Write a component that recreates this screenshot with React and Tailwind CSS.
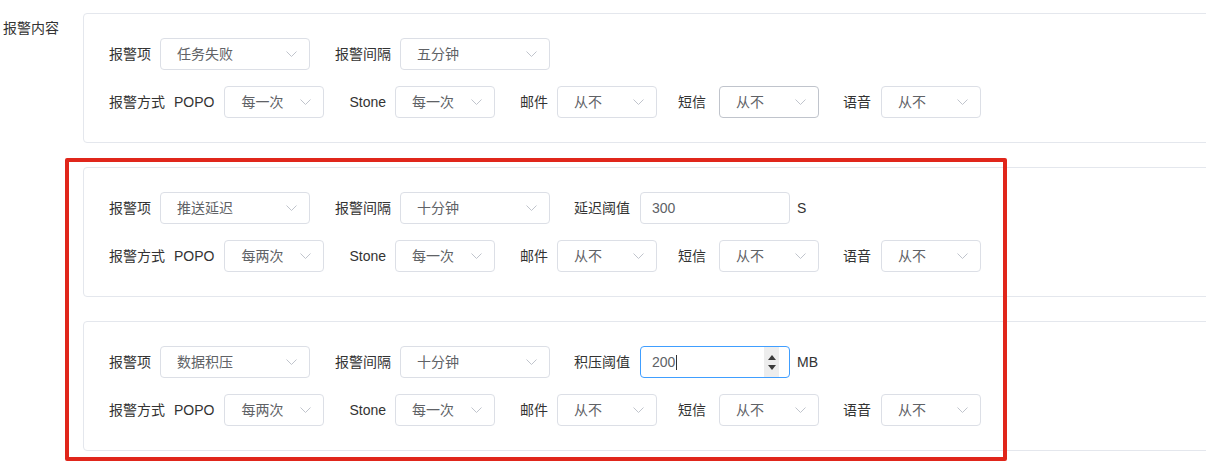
import React from 'react';

const Chevron = () => (
  <svg width="11" height="6" viewBox="0 0 11 6" className="shrink-0">
    <polyline points="0.5,0.5 5.5,5.5 10.5,0.5" fill="none" stroke="#c0c4cc" strokeWidth="1" />
  </svg>
);

const Select = ({ value, wide, hover }) => (
  <div
    className={`flex items-center justify-between h-[32px] pl-[16px] pr-[12px] rounded-[4px] border bg-white ${
      wide ? 'w-[150px]' : 'w-[100px]'
    } ${hover ? 'border-[#c0c4cc]' : 'border-[#dcdfe6]'}`}
  >
    <span className="text-[14px] text-[#606266]">{value}</span>
    <Chevron />
  </div>
);

const NumberInput = ({ value, focused }) => (
  <div
    className={`relative flex items-center w-[150px] h-[32px] pl-[11px] rounded-[4px] border bg-white ${
      focused ? 'border-[#409eff]' : 'border-[#dcdfe6]'
    }`}
  >
    <span className="text-[14px] text-[#606266]">{value}</span>
    {focused && (
      <>
        <span className="w-[1px] h-[15px] bg-[#303133] ml-[1px]" />
        <div className="absolute right-[10px] top-0 bottom-0 w-[15px] bg-[#ededed] flex flex-col items-center justify-center gap-[5px]">
          <svg width="8" height="5" viewBox="0 0 8 5">
            <polygon points="4,0 8,5 0,5" fill="#3a3a3a" />
          </svg>
          <svg width="8" height="5" viewBox="0 0 8 5">
            <polygon points="0,0 8,0 4,5" fill="#3a3a3a" />
          </svg>
        </div>
      </>
    )}
  </div>
);

const AlarmCard = ({ item, interval, popo, threshold, smsHover }) => (
  <div className="w-[1150px] shrink-0 h-[130px] border border-[#e4e7ed] rounded-[4px] bg-white pl-[25px] pt-[24px] flex flex-col gap-[16px] text-[14px] text-[#333]">
    <div className="flex items-center h-[32px]">
      <span className="mr-[9px]">报警项</span>
      <Select value={item} wide />
      <span className="ml-[25px] mr-[9px]">报警间隔</span>
      <Select value={interval} wide />
      {threshold && (
        <>
          <span className="ml-[24px] mr-[10px]">{threshold.label}</span>
          <NumberInput value={threshold.value} focused={threshold.focused} />
          <span className="ml-[7px]">{threshold.unit}</span>
        </>
      )}
    </div>
    <div className="flex items-center h-[32px]">
      <span className="mr-[9px]">报警方式</span>
      <span className="mr-[10px]">POPO</span>
      <Select value={popo} />
      <span className="ml-[25px] mr-[9px]">Stone</span>
      <Select value="每一次" />
      <span className="ml-[25px] mr-[9px]">邮件</span>
      <Select value="从不" />
      <span className="ml-[21px] mr-[13px]">短信</span>
      <Select value="从不" hover={smsHover} />
      <span className="ml-[24px] mr-[10px]">语音</span>
      <Select value="从不" />
    </div>
  </div>
);

export default function App() {
  return (
    <div
      className="relative w-[1206px] h-[472px] overflow-hidden bg-white"
      style={{ fontFamily: '"Liberation Sans", "Noto Sans CJK SC", sans-serif' }}
    >
      <div className="flex pt-[13px]">
        <div className="w-[83px] shrink-0 pl-[3px] text-[14px] leading-[30px] text-[#333]">报警内容</div>
        <div className="flex flex-col gap-[24px]">
          <AlarmCard item="任务失败" interval="五分钟" popo="每一次" smsHover />
          <AlarmCard
            item="推送延迟"
            interval="十分钟"
            popo="每两次"
            threshold={{ label: '延迟阈值', value: '300', unit: 'S' }}
          />
          <AlarmCard
            item="数据积压"
            interval="十分钟"
            popo="每两次"
            threshold={{ label: '积压阈值', value: '200', unit: 'MB', focused: true }}
          />
        </div>
      </div>

      {/* annotation frame drawn over the last two cards */}
      <div className="absolute left-[65px] top-[158px] w-[942px] h-[303px] border-[4px] border-[#e0261b] rounded-[2px] pointer-events-none" />
    </div>
  );
}
